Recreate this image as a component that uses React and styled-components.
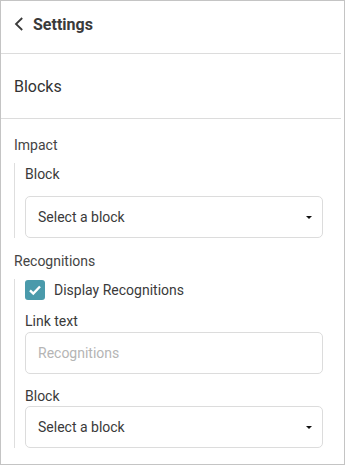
import React from "react";
import styled, { createGlobalStyle } from "styled-components";

const GlobalStyle = createGlobalStyle`
  body {
    margin: 0;
    font-family: Roboto, "Liberation Sans", Arial, sans-serif;
    color: #333;
    background: #fff;
  }
`;

const Frame = styled.div`
  box-sizing: border-box;
  width: 345px;
  height: 465px;
  border: 1px solid #c4c4c4;
  overflow: hidden;
`;

const Header = styled.div`
  box-sizing: border-box;
  height: 52px;
  display: flex;
  align-items: center;
  gap: 9px;
  padding: 0 0 6px 13px;
  font-size: 16px;
  font-weight: 700;
  color: #3a3a3a;
`;

const Divider = styled.div`
  height: 1px;
  background: #dcdcdc;
  margin-right: 3px;
`;

const SectionTitle = styled.div`
  height: 64px;
  display: flex;
  align-items: center;
  padding-left: 13px;
  font-size: 16px;
  color: #333;
`;

const Content = styled.div`
  padding: 16px 21px 0 13px;
  display: flex;
  flex-direction: column;
`;

const GroupTitle = styled.div`
  font-size: 14px;
  line-height: 20px;
  color: #444;
`;

const Group = styled.div`
  border-left: 1px solid #dedede;
  padding-left: 10px;
  margin-top: ${({ $top }) => $top}px;
  margin-bottom: 13px;
  display: flex;
  flex-direction: column;
`;

const Label = styled.div`
  font-size: 14px;
  line-height: 20px;
  color: #3a3a3a;
  margin-top: ${({ $top }) => $top || 0}px;
  margin-bottom: ${({ $gap }) => $gap || 0}px;
`;

const Field = styled.div`
  box-sizing: border-box;
  height: 42px;
  border: 1px solid #dcdcdc;
  border-radius: 5px;
  display: flex;
  align-items: center;
  justify-content: space-between;
  padding: 0 10px 0 12px;
  font-size: 14px;
  color: ${({ $placeholder }) => ($placeholder ? "#b5b5b5" : "#3a3a3a")};
`;

const Caret = styled.span`
  width: 0;
  height: 0;
  border-left: 3px solid transparent;
  border-right: 3px solid transparent;
  border-top: 3px solid #111;
`;

const CheckRow = styled.label`
  display: flex;
  align-items: center;
  gap: 9px;
  height: 20px;
  margin-top: 1px;
  font-size: 14px;
  color: #3a3a3a;
`;

const Box = styled.span`
  width: 20px;
  height: 20px;
  border-radius: 3px;
  background: #4a9aab;
  display: flex;
  align-items: center;
  justify-content: center;
`;

const Select = ({ children }) => (
  <Field>
    {children}
    <Caret />
  </Field>
);

export default function App() {
  return (
    <Frame>
      <GlobalStyle />
      <Header>
        <svg width="10" height="14" viewBox="0 0 10 14">
          <path d="M8.2 1 2 7 8.2 13" fill="none" stroke="#3a3a3a" strokeWidth="1.8" />
        </svg>
        Settings
      </Header>
      <Divider />
      <SectionTitle>Blocks</SectionTitle>
      <Divider />
      <Content>
        <GroupTitle>Impact</GroupTitle>
        <Group $top={8}>
          <Label $top={1} $gap={12}>Block</Label>
          <Select>Select a block</Select>
        </Group>
        <GroupTitle>Recognitions</GroupTitle>
        <Group $top={8}>
          <CheckRow>
            <Box>
              <svg width="14" height="12" viewBox="0 0 14 12">
                <path d="M2 6.3 5.3 9.5 12 2.5" fill="none" stroke="#fff" strokeWidth="2.4" />
              </svg>
            </Box>
            Display Recognitions
          </CheckRow>
          <Label $top={11} $gap={1}>Link text</Label>
          <Field $placeholder>Recognitions</Field>
          <Label $top={12}>Block</Label>
          <Select>Select a block</Select>
        </Group>
      </Content>
    </Frame>
  );
}
